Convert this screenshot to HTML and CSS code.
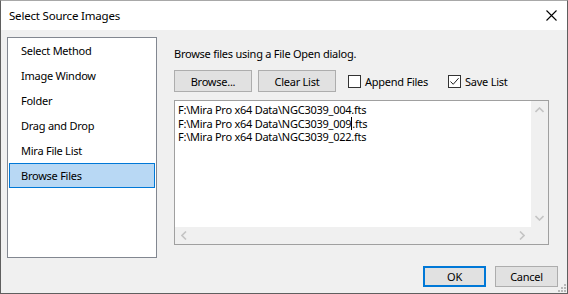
FILE: index.html
```html
<!DOCTYPE html>
<html>
<head>
<meta charset="utf-8">
<link rel="stylesheet" href="styles.css">
</head>
<body>
<div class="window">
  <div class="titlebar">
    <span class="title">Select Source Images</span>
    <span class="close">
      <svg width="11" height="11" viewBox="0 0 11 11"><path d="M0.5 0.5 L10.5 10.5 M10.5 0.5 L0.5 10.5" stroke="#000" stroke-width="1.1" fill="none"/></svg>
    </span>
  </div>
  <div class="client">
    <div class="main">
      <div class="methods">
        <div class="item">Select Method</div>
        <div class="item">Image Window</div>
        <div class="item">Folder</div>
        <div class="item">Drag and Drop</div>
        <div class="item">Mira File List</div>
        <div class="item selected">Browse Files</div>
      </div>
      <div class="panel">
        <div class="hint">Browse files using a File Open dialog.</div>
        <div class="toolbar">
          <button class="btn">Browse...</button>
          <button class="btn">Clear List</button>
          <label class="check"><span class="box"></span>Append Files</label>
          <label class="check"><span class="box">
            <svg width="11" height="11" viewBox="0 0 11 11"><path d="M1.5 5.5 L4.2 8.3 L9.6 2.2" stroke="#222" stroke-width="1" fill="none"/></svg>
          </span>Save List</label>
        </div>
        <div class="filebox">
          <div class="files">
            <div class="line">F:\Mira Pro x64 Data\NGC3039_004.fts</div>
            <div class="line">F:\Mira Pro x64 Data\NGC3039_009<span class="caret"></span>.fts</div>
            <div class="line">F:\Mira Pro x64 Data\NGC3039_022.fts</div>
          </div>
          <div class="vscroll">
            <svg width="9" height="6" viewBox="0 0 9 6"><path d="M0.5 5 L4.5 1 L8.5 5" stroke="#c4c4c4" stroke-width="1.6" fill="none"/></svg>
            <svg width="9" height="6" viewBox="0 0 9 6"><path d="M0.5 1 L4.5 5 L8.5 1" stroke="#c4c4c4" stroke-width="1.6" fill="none"/></svg>
          </div>
          <div class="hscroll">
            <svg width="6" height="9" viewBox="0 0 6 9"><path d="M5 0.5 L1 4.5 L5 8.5" stroke="#c4c4c4" stroke-width="1.6" fill="none"/></svg>
            <svg width="6" height="9" viewBox="0 0 6 9"><path d="M1 0.5 L5 4.5 L1 8.5" stroke="#c4c4c4" stroke-width="1.6" fill="none"/></svg>
          </div>
          <div class="corner"></div>
        </div>
      </div>
    </div>
    <div class="footer">
      <button class="btn dlg default">OK</button>
      <button class="btn dlg">Cancel</button>
    </div>
    <div class="grip">
      <svg width="10" height="10" viewBox="0 0 10 10" fill="#b8b8b8">
        <rect x="7" y="1" width="2" height="2"/>
        <rect x="4" y="4" width="2" height="2"/><rect x="7" y="4" width="2" height="2"/>
        <rect x="1" y="7" width="2" height="2"/><rect x="4" y="7" width="2" height="2"/><rect x="7" y="7" width="2" height="2"/>
      </svg>
    </div>
  </div>
</div>
</body>
</html>
```

FILE: styles.css
```css
* { box-sizing: border-box; }
html, body { margin: 0; padding: 0; background: #f0f0f0; }
body {
  font-family: "Noto Sans", "Open Sans", "Liberation Sans", sans-serif;
  font-size: 11px;
  letter-spacing: -0.25px;
  color: #000;
}
.window {
  width: 568px;
  height: 294px;
  border: 1px solid #5f5f5f;
  border-top-color: #a8a8a8;
  display: flex;
  flex-direction: column;
  background: #f0f0f0;
}
.titlebar {
  flex-shrink: 0;
  height: 29px;
  background: #fff;
  display: flex;
  align-items: center;
  justify-content: space-between;
  padding-left: 8px;
  padding-right: 10px;
  font-size: 11.5px;
  letter-spacing: -0.2px;
}
.close { display: flex; align-items: center; }
.client {
  flex: 1;
  position: relative;
  display: flex;
  flex-direction: column;
  padding: 7px 8px 0 6px;
}
.main { display: flex; flex-shrink: 0; }
.methods {
  width: 150px;
  height: 221px;
  background: #fff;
  border: 1px solid #828790;
  padding: 0 0 0 1px;
}
.item {
  height: 25px;
  width: 146px;
  line-height: 23px;
  padding-left: 11px;
  border: 1px solid transparent;
}
.item.selected {
  background: #b8d8f4;
  border-color: #0078d7;
}
.panel {
  margin-left: 17px;
  width: 375px;
  display: flex;
  flex-direction: column;
}
.hint {
  height: 16px;
  line-height: 16px;
  margin-top: 9px;
}
.toolbar {
  display: flex;
  align-items: center;
  margin-top: 8px;
  height: 22px;
}
.btn {
  font: inherit;
  letter-spacing: inherit;
  color: #000;
  background: #e1e1e1;
  border: 1px solid #adadad;
  height: 22px;
  width: 78px;
  padding: 0;
  margin: 0;
}
.toolbar .btn + .btn { margin-left: 6px; }
.check {
  display: flex;
  align-items: center;
  margin-left: 12px;
}
.check + .check { margin-left: 20px; }
.box {
  width: 13px;
  height: 13px;
  border: 1px solid #333;
  background: #fff;
  margin-right: 4px;
  display: flex;
  align-items: center;
  justify-content: center;
}
.filebox {
  margin-top: 8px;
  height: 145px;
  border: 1px solid #a0a0a0;
  background: #fff;
  display: grid;
  grid-template-columns: 1fr 17px;
  grid-template-rows: 1fr 17px;
}
.files {
  padding: 2px 0 0 3px;
  line-height: 13.5px;
}
.caret {
  display: inline-block;
  width: 1px;
  height: 13px;
  background: #000;
  vertical-align: -2px;
}
.vscroll {
  background: #f0f0f0;
  display: flex;
  flex-direction: column;
  justify-content: space-between;
  align-items: center;
  padding: 6px 0 6px;
}
.hscroll {
  background: #f0f0f0;
  display: flex;
  justify-content: space-between;
  align-items: center;
  padding: 0 6px;
}
.corner { background: #f0f0f0; }
.footer {
  display: flex;
  justify-content: flex-end;
  gap: 9px;
  margin-top: 8px;
  padding-right: 1px;
}
.btn.dlg { width: 63px; height: 21px; }
.btn.default { border: 2px solid #0078d7; }
.grip {
  position: absolute;
  right: 0;
  bottom: 0;
  line-height: 0;
}
```
